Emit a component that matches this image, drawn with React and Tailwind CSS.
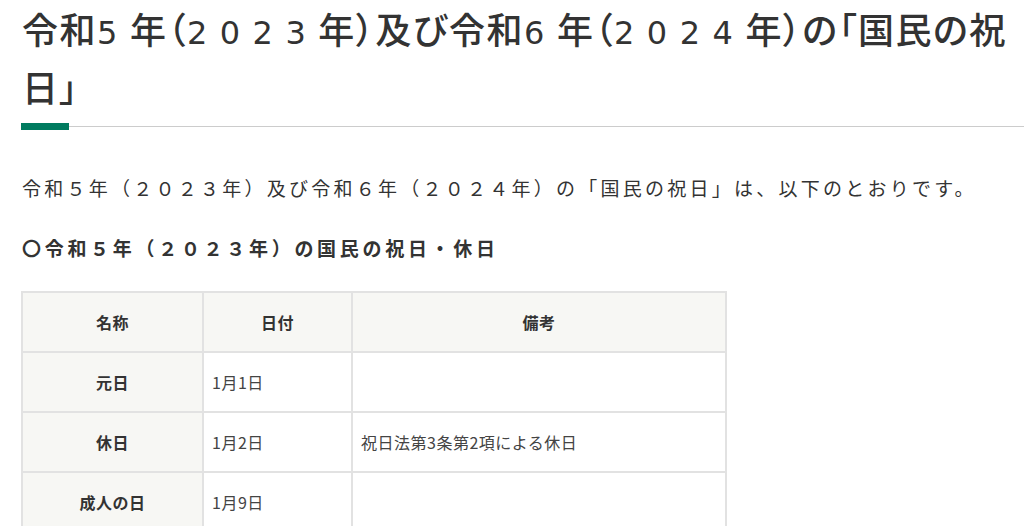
export default function App() {
  const rows = [
    { name: "元日", date: "1月1日", note: "" },
    { name: "休日", date: "1月2日", note: "祝日法第3条第2項による休日" },
    { name: "成人の日", date: "1月9日", note: "" },
  ];
  const D = ({ children }) => (
    <span
      className="text-[32px] tracking-[12.5px] font-medium"
      style={{ fontFamily: '"DejaVu Sans", sans-serif' }}
    >
      {children}
    </span>
  );
  return (
    <div
      className="w-[1024px] h-[526px] overflow-hidden bg-white text-[#333]"
      style={{ fontFamily: '"Noto Sans CJK JP", "Noto Sans", sans-serif' }}
    >
      <div className="pl-[22px] pt-[2px]">
        <h1 className="text-[36px] leading-[53px] font-medium tracking-[1.5px] text-[#333] [font-feature-settings:'palt']">
          令和<D>5</D>年（<D>2023</D>年）及び令和<D>6</D>年（<D>2024</D>年）の「国民の祝日」
        </h1>
      </div>
      <div className="flex items-center mt-[10px] pl-[21px]">
        <div className="w-[48px] h-[7px] bg-[#007b5f]" />
        <div className="flex-1 h-px bg-[#cccccc]" />
      </div>
      <p className="pl-[22px] mt-[43px] text-[19px] leading-[30px] tracking-[3.25px] text-[#333]">
        令和５年（２０２３年）及び令和６年（２０２４年）の「国民の祝日」は、以下のとおりです。
      </p>
      <h3 className="pl-[22px] mt-[30px] text-[19px] leading-[30px] font-bold tracking-[3.7px] text-[#333]">
        〇令和５年（２０２３年）の国民の祝日・休日
      </h3>
      <div className="pl-[21px] mt-[28px]">
        <table className="w-[706px] border-collapse text-[16px] tracking-[0.5px] text-[#333]">
          <thead>
            <tr className="h-[60px] bg-[#f7f7f4]">
              <th className="w-[181px] border-2 border-[#e2e2e2] font-bold text-center">名称</th>
              <th className="w-[149px] border-2 border-[#e2e2e2] font-bold text-center">日付</th>
              <th className="border-2 border-[#e2e2e2] font-bold text-center">備考</th>
            </tr>
          </thead>
          <tbody>
            {rows.map((r) => (
              <tr key={r.name} className="h-[60px]">
                <td className="border-2 border-[#e2e2e2] bg-[#f7f7f4] font-bold text-center">{r.name}</td>
                <td className="border-2 border-[#e2e2e2] px-[8px] text-[#444]">{r.date}</td>
                <td className="border-2 border-[#e2e2e2] px-[8px] text-[#444]">{r.note}</td>
              </tr>
            ))}
          </tbody>
        </table>
      </div>
    </div>
  );
}
